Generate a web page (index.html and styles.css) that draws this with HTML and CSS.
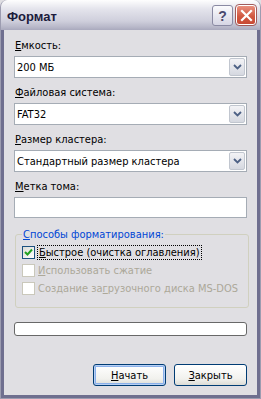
FILE: index.html
```html
<!DOCTYPE html>
<html>
<head>
    <title>Формат</title>
    <link rel="stylesheet" href="styles.css">
</head>
<body>
    <div class="window">
        <div class="titlebar">
            <span class="title">Формат</span>
            <div class="title-buttons">
                <div class="tb-help">?</div>
                <div class="tb-close">
                    <svg width="13" height="13" viewBox="0 0 13 13">
                        <path d="M2 2 L11 11 M11 2 L2 11" stroke="#fff" stroke-width="2.2" stroke-linecap="square"/>
                    </svg>
                </div>
            </div>
        </div>

        <div class="client">
            <div class="label"><u>Е</u>мкость:</div>
            <div class="combo">
                <span>200 МБ</span>
                <div class="arrow"><svg width="9" height="6" viewBox="0 0 9 6"><path d="M1 1 L4.5 4.5 L8 1" fill="none" stroke="#4d6185" stroke-width="1.8"/></svg></div>
            </div>

            <div class="label"><u>Ф</u>айловая система:</div>
            <div class="combo">
                <span>FAT32</span>
                <div class="arrow"><svg width="9" height="6" viewBox="0 0 9 6"><path d="M1 1 L4.5 4.5 L8 1" fill="none" stroke="#4d6185" stroke-width="1.8"/></svg></div>
            </div>

            <div class="label"><u>Р</u>азмер кластера:</div>
            <div class="combo">
                <span>Стандартный размер кластера</span>
                <div class="arrow"><svg width="9" height="6" viewBox="0 0 9 6"><path d="M1 1 L4.5 4.5 L8 1" fill="none" stroke="#4d6185" stroke-width="1.8"/></svg></div>
            </div>

            <div class="label"><u>М</u>етка тома:</div>
            <div class="textbox"></div>

            <fieldset class="group">
                <legend><u>С</u>пособы форматирования:</legend>
                <div class="check">
                    <div class="box on"><svg width="9" height="9" viewBox="0 0 9 9"><path d="M1 4 L3.5 6.5 L8 1.5" fill="none" stroke="#21a121" stroke-width="2"/></svg></div>
                    <span class="focus"><u>Б</u>ыстрое (очистка оглавления)</span>
                </div>
                <div class="check disabled">
                    <div class="box"></div>
                    <span><u>И</u>спользовать сжатие</span>
                </div>
                <div class="check disabled">
                    <div class="box"></div>
                    <span>Создание за<u>г</u>рузочного диска MS-DOS</span>
                </div>
            </fieldset>

            <div class="progress"></div>

            <div class="buttons">
                <div class="btn default"><u>Н</u>ачать</div>
                <div class="btn"><u>З</u>акрыть</div>
            </div>
        </div>
    </div>
</body>
</html>
```

FILE: styles.css
```css
body {
    margin: 0;
    background: #e0dfe3;
    font-family: Tahoma, "DejaVu Sans Condensed", "DejaVu Sans", sans-serif;
    font-size: 11px;
    color: #000;
}

.window {
    width: 261px;
    height: 399px;
    box-sizing: border-box;
    border: 1px solid #9c9cb0;
    border-top: none;
    border-radius: 7px 7px 0 0;
    background: #e0dfe3;
    display: flex;
    flex-direction: column;
    overflow: hidden;
}

.titlebar {
    height: 30px;
    flex-shrink: 0;
    display: flex;
    align-items: center;
    justify-content: space-between;
    padding: 0 3px 0 6px;
    background: linear-gradient(#fefefe 0%, #e4e4ec 30%, #cfcfdc 70%, #b8b8c9 90%, #a9a9bd 100%);
    border-radius: 7px 7px 0 0;
}

.title {
    font-family: "Liberation Sans", Arial, sans-serif;
    font-weight: bold;
    font-size: 13px;
    color: #1c1c3c;
    margin-top: 2px;
}

.title-buttons {
    display: flex;
    gap: 2px;
    margin-top: 1px;
}

.tb-help, .tb-close {
    width: 21px;
    height: 21px;
    box-sizing: border-box;
    border-radius: 3px;
    display: flex;
    align-items: center;
    justify-content: center;
}

.tb-help {
    border: 1px solid #8a8aa3;
    background: linear-gradient(#fbfbfd, #d6d6e4);
    color: #4a4a6e;
    font-family: "Liberation Sans", Arial, sans-serif;
    font-weight: bold;
    font-size: 14px;
}

.tb-close {
    border: 1px solid #ffffff;
    outline: 1px solid #a15b5b;
    background: linear-gradient(#e9907e, #d0563f 60%, #c84a35);
    width: 20px;
    height: 20px;
    margin: 0 1px;
}

.client {
    flex: 1;
    border: 3px solid #6f6f8f;
    border-top: none;
    padding: 9px 10px 0 10px;
    display: flex;
    flex-direction: column;
}

.label {
    height: 13px;
    line-height: 13px;
    padding-left: 1px;
    margin-bottom: 4px;
}

.combo {
    height: 22px;
    box-sizing: border-box;
    border: 1px solid #a5acb5;
    background: #fff;
    display: flex;
    align-items: center;
    justify-content: space-between;
    padding: 0 1px 0 2px;
    margin-bottom: 8px;
}

.arrow {
    width: 16px;
    height: 18px;
    box-sizing: border-box;
    border: 1px solid #c1c6cf;
    border-radius: 2px;
    background: linear-gradient(#f3f3f6, #d5d8e0);
    display: flex;
    align-items: center;
    justify-content: center;
}

.textbox {
    height: 21px;
    box-sizing: border-box;
    border: 1px solid #a5acb5;
    background: #fff;
    margin-bottom: 10px;
}

.group {
    margin: 0 0 0 1px;
    padding: 5px 6px 8px 6px;
    border: 1px solid #d0d0bf;
    border-radius: 3px;
    height: 80px;
    box-sizing: border-box;
    width: 234px;
}

.group legend {
    color: #0046d5;
    padding: 0 1px;
    margin-left: 0;
}

.check {
    display: flex;
    align-items: center;
    gap: 3px;
    height: 13px;
    margin-bottom: 5px;
}

.box {
    width: 13px;
    height: 13px;
    box-sizing: border-box;
    border: 1px solid #1c5180;
    background: linear-gradient(135deg, #dcdcd7, #fff);
    display: flex;
    align-items: center;
    justify-content: center;
}

.check.disabled {
    color: #aca899;
}

.check.disabled .box {
    border-color: #cac8bb;
    background: #fff;
}

.focus {
    outline: 1px dotted #000;
    padding: 0 1px;
}

.progress {
    margin-top: 14px;
    height: 14px;
    box-sizing: border-box;
    border: 1px solid #686868;
    border-radius: 3px;
    background: #fff;
}

.buttons {
    margin-top: auto;
    margin-bottom: 9px;
    display: flex;
    justify-content: flex-end;
    gap: 8px;
}

.btn {
    width: 73px;
    height: 22px;
    box-sizing: border-box;
    border: 1px solid #003c74;
    border-radius: 3px;
    background: linear-gradient(#ffffff, #f1f1ed 70%, #dcdcd6);
    display: flex;
    align-items: center;
    justify-content: center;
}

.btn.default {
    box-shadow: inset 0 0 0 1px #b8d0f4, inset 0 0 0 2px #8ab0ea;
}
```
